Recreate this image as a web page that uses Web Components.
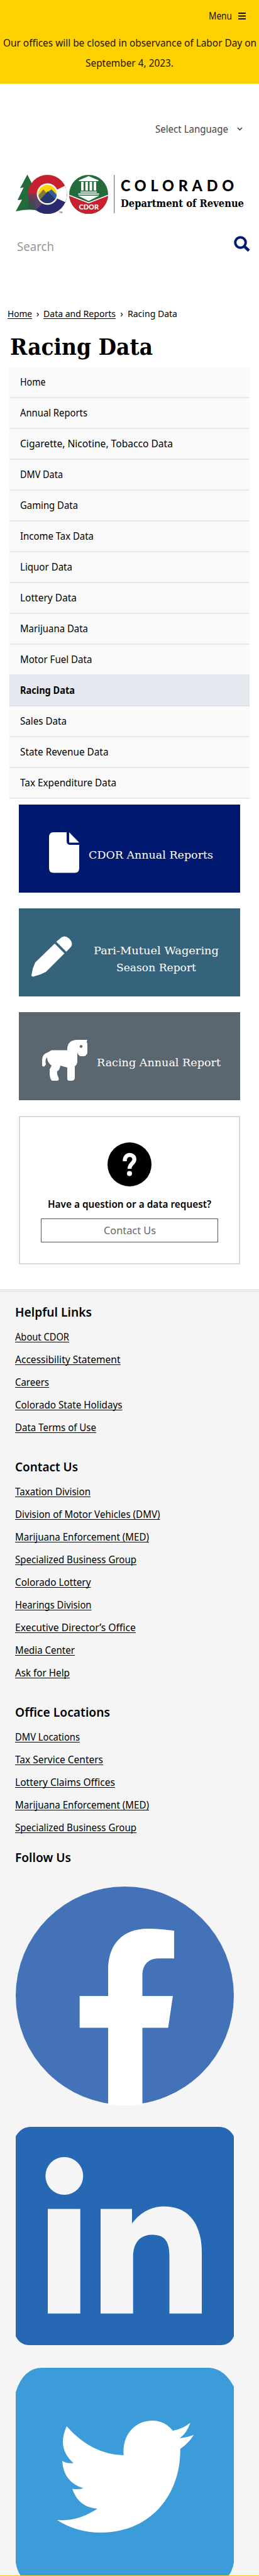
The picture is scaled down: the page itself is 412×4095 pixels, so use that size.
<!DOCTYPE html>
<html lang="en">
<head>
<meta charset="utf-8">
<title>Racing Data | Department of Revenue</title>
<style>
html,body{margin:0;padding:0;background:#fff}
body{width:412px;height:4095px;overflow:hidden;font:16px/1.5 "Noto Sans","Liberation Sans",sans-serif;color:#000}
</style>
</head>
<body>
<revenue-page></revenue-page>
<script>
const define = (name, html, init) => {
  const template = document.createElement('template');
  template.innerHTML = html;
  customElements.define(name, class extends HTMLElement {
    connectedCallback() {
      if (this.shadowRoot) return;
      this.attachShadow({ mode: 'open' }).append(template.content.cloneNode(true));
      if (init) init(this, this.shadowRoot);
    }
  });
};

// Condenses one line of text to the width given by its "w" attribute.
define('fit-text', `<style>
:host{display:block;white-space:nowrap}
span{display:inline-block;transform-origin:0 50%}
:host([u]) span{text-decoration:underline;text-decoration-thickness:1px;text-underline-offset:2px;text-decoration-skip-ink:none}
</style><span><slot></slot></span>`, (host, root) => {
  const w = +host.getAttribute('w'), span = root.querySelector('span');
  host.style.width = w + 'px';
  span.style.transform = `scaleX(${w / span.getBoundingClientRect().width})`;
});

define('site-banner', `<style>
:host{display:block;height:133px;background:#ffd100;color:#201400}
.menu{display:flex;height:50px;align-items:center;justify-content:flex-end;gap:10px;padding-right:21px;margin-bottom:2px}
.note{display:flex;flex-direction:column;align-items:center;line-height:32px}
</style>
<div class="menu"><fit-text w="37">Menu</fit-text><svg width="12" height="11"><path d="M0 1h12M0 5.5h12M0 10h12" stroke="#111" stroke-width="2"/></svg></div>
<div class="note"><fit-text w="403">Our offices will be closed in observance of Labor Day on</fit-text><fit-text w="140">September 4, 2023.</fit-text></div>`);

define('brand-logo', `<style>
:host{display:flex;height:70px;gap:8px}
svg{display:block;flex:none}
.name{font:900 24px/30px Lato,sans-serif;letter-spacing:7px;padding-top:5.7px}
.dept{font:700 16px/24px "DejaVu Serif",serif;margin-top:2.7px}
</style>
<svg width="160" height="70" viewBox="24 274 160 70">
<defs><clipPath id="c"><circle cx="75.5" cy="309" r="31"/></clipPath><clipPath id="m"><circle cx="75.5" cy="308.5" r="14.6"/></clipPath><clipPath id="d"><circle cx="141" cy="309" r="31"/></clipPath></defs>
<path d="M43.5 277.5L54 298 66 335Q44 331 25 336L35 317.500 28 318 37.500 298 32 299Z" fill="#236b3b"/>
<g clip-path="url(#c)"><path d="M40 275h70v70H40z" fill="#c8202f"/><path d="M44 327L62 309 78 309 110 309V345H44z" fill="#2a2a70"/><path d="M44 309L55 307 67 319 51 338H40z" fill="#7e3657"/><path d="M49 323L58 313 68 323 56 335z" fill="#5b4262"/><path d="M75.500 309L112 291V325L92 316z" fill="#fff"/></g>
<path d="M47 307L54 318 60 335 44 332z" fill="#2d4a4f" opacity=".45"/>
<circle cx="75.5" cy="308.500" r="17" fill="#fff"/>
<g clip-path="url(#m)"><path d="M58 290h36v36H58z" fill="#ffd200"/><path d="M58 314L69 301 78 312 84 303 94 313V326H58z" fill="#7b7d3e"/><path d="M75 306L82 301 92 312V318L78 316z" fill="#315d9b"/><path d="M58 324L76 304 94 323V326H58z" fill="#25386f"/></g>
<text x="93.500" y="338.500" font-family="Liberation Sans,sans-serif" font-size="4" fill="#223">TM</text>
<g clip-path="url(#d)"><path d="M109 277h64v64h-64z" fill="#236b3b"/><path d="M109 310L141 322.500 173 310V342H109z" fill="#c8202f"/><path d="M109 310L141 322.500 173 310" fill="none" stroke="#fff" stroke-width="1.6"/></g>
<g fill="#fff"><path d="M141 280L156.500 286.500V288H125.500V286.500zM129 289h4v14h-4zM135.800 289h4v14h-4zM142.500 289h4v14h-4zM149 289h4v14h-4zM128 304.500h26v1.800h-26zM124.500 307.500h33v1.900h-33zM124 311h34L141 319.500z"/></g>
<text x="125.500" y="333" font-family="Lato,sans-serif" font-weight="900" font-size="11" fill="#fff">CDOR</text>
<path d="M181.700 278V339" stroke="#888" stroke-width="1.400"/>
</svg>
<div><fit-text class="name" w="187">COLORADO</fit-text><fit-text class="dept" w="196">Department of Revenue</fit-text></div>`);

define('site-header', `<style>
:host{display:block;height:333px;padding-top:56px;box-sizing:border-box}
.lang{display:flex;justify-content:flex-end;align-items:center;height:32px;color:#444;gap:14px;padding-right:26px}
brand-logo{margin:53px 0 0 24px}
.search{display:flex;justify-content:space-between;margin-top:26px;padding:0 14px 0 27px;color:#999;font-size:20px;line-height:44px}
svg{margin-top:5px}
</style>
<div class="lang"><fit-text w="116">Select Language</fit-text><svg style="margin:0" width="9" height="6"><path d="M1 1L4.500 4.500 8 1" fill="none" stroke="#444" stroke-width="1.600"/></svg></div>
<brand-logo></brand-logo>
<div class="search"><fit-text w="59">Search</fit-text><svg width="26" height="26"><circle cx="10.500" cy="10.500" r="8.300" fill="none" stroke="#001970" stroke-width="4"/><path d="M16.500 16.500L24 23.500" stroke="#001970" stroke-width="4.500"/></svg></div>`);

define('bread-crumbs', `<style>
:host{display:flex;font-size:15px;line-height:30px;padding:17px 0 0 12px;height:49px;box-sizing:border-box}
i{font-style:normal;width:18px;text-align:center}
</style><fit-text u w="39">Home</fit-text><i>›</i><fit-text u w="115">Data and Reports</fit-text><i style="width:19px">›</i><fit-text w="79">Racing Data</fit-text>`);

const menu = [['Home',40.5],['Annual Reports',107],['Cigarette, Nicotine, Tobacco Data',243],['DMV Data',68],['Gaming Data',92],['Income Tax Data',117],['Liquor Data',83],['Lottery Data',90],['Marijuana Data',108],['Motor Fuel Data',114.5],['Racing Data',87],['Sales Data',74],['State Revenue Data',140.5],['Tax Expenditure Data',153]];
define('data-menu', `<style>
:host{display:block;margin:0 15px}
.item{height:49px;box-sizing:border-box;border-bottom:2px solid #e9e9e9;background:#fafafa;padding-left:17px;line-height:46px}
.active{background:#e6e8f0;font-weight:700;margin-top:-2px;padding-top:2px;height:51px;border-color:#e0e1e8}
</style>` + menu.map(([t, w]) => `<div class="item${t === 'Racing Data' ? ' active' : ''}"><fit-text w="${w}">${t}</fit-text></div>`).join(''));

define('report-card', `<style>
:host{display:flex;box-sizing:border-box;height:140px;margin:0 30px 25px;color:#fff;font:17px/27px "DejaVu Serif",serif}
::slotted(svg){display:block;margin-top:44px;flex:none}
.label{display:flex;flex-direction:column;align-items:center}
</style><slot name="icon"></slot><div class="label"><slot></slot></div>`, (host, root) => {
  host.style.background = host.getAttribute('fill');
  host.style.paddingLeft = host.getAttribute('inset') + 'px';
  root.querySelector('.label').style.cssText = `padding:${host.getAttribute('top')}px 0 0 ${host.getAttribute('gap')}px`;
});

define('question-box', `<style>
:host{display:flex;flex-direction:column;align-items:center;box-sizing:border-box;margin:0 30px;height:236px;border:2px solid #d9d9d9;padding-top:40px}
b{display:block;margin:13px 0 8px;line-height:30px;font-weight:600}
.btn{box-sizing:border-box;width:282px;height:38px;border:1px solid #555;display:flex;justify-content:center;color:#666;font-size:17px;line-height:36px}
</style>
<svg width="70" height="70"><circle cx="35" cy="35" r="35"/><path d="M27.500 30C27 16 43.500 18 42.700 27.500C42.200 33.500 35 34 35 42" fill="none" stroke="#fff" stroke-width="6.400"/><circle cx="35" cy="49.500" r="4" fill="#fff"/></svg>
<b><fit-text w="260">Have a question or a data request?</fit-text></b>
<div class="btn"><fit-text w="83">Contact Us</fit-text></div>`);

define('link-group', `<style>
:host{display:block;margin-bottom:30px;line-height:36px}
h2{font-size:20px;font-weight:600;line-height:30px;height:36px;margin:0}
</style><h2><slot name="title"></slot></h2><slot></slot>`);

const group = (title, tw, links, style = '') => `<link-group style="${style}"><fit-text slot="title" w="${tw}">${title}</fit-text>${links.map(([t, w]) => `<fit-text u w="${w}">${t}</fit-text>`).join('')}</link-group>`;

define('site-footer', `<style>
:host{display:block;box-sizing:border-box;height:2045px;overflow:hidden;background:#f5f5f5;border-top:1px solid #ccc;position:relative}
.rule{height:1px;background:#dedede;margin:2px 0 17px}
.in{padding-left:24.300px}
.social{margin-left:25px}
svg{display:block}
.bar{position:absolute;left:0;right:0;bottom:0;height:1px;background:#ffd100}
</style>
<div class="rule"></div><div class="in">
${group('Helpful Links',122,[['About CDOR',86],['Accessibility Statement',167.5],['Careers',54],['Colorado State Holidays',170.5],['Data Terms of Use',129]])}
${group('Contact Us',100,[['Taxation Division',120],['Division of Motor Vehicles (DMV)',230.5],['Marijuana Enforcement (MED)',213],['Specialized Business Group',193],['Colorado Lottery',120.5],['Hearings Division',121.5],['Executive Director’s Office',192],['Media Center',95],['Ask for Help',87]])}
${group('Office Locations',151,[['DMV Locations',103],['Tax Service Centers',140],['Lottery Claims Offices',159],['Marijuana Enforcement (MED)',213],['Specialized Business Group',193]],'margin-bottom:15px')}
${group('Follow Us',89,[],'margin-bottom:25px')}
</div><div class="social">
<svg width="347" height="348"><circle cx="173.500" cy="173.500" r="173.500" fill="#4472b8"/><path d="M147 346.500V224.500H101.700V174H147V132C147 92 170 67 210 67C226 67 240 69 252 70.300V114.300H228C211 114.300 201.500 124 201.500 142V174H250L242.500 224.500H201.500V346.500Q174 350 147 346.500z" fill="#fff"/></svg>
<svg width="347" height="347" style="margin-top:34px"><path d="M0 15Q9 0 24 0H323Q339 0 347 15V333Q341 347 325 347H22Q7 347 0 333z" fill="#2768b4"/><g fill="#f5f5f5"><circle cx="77.300" cy="78" r="30"/><path d="M51 130.500h51.700V296.700H51zM135 130.500H185V153.500Q205 126.500 236 126.500C276 126.500 296 155 296 200V296.700H244.500V207C244.500 184 239 171.500 217 171.500C197 171.500 186.700 185 186.700 207V296.700H135z"/></g></svg>
<svg width="347" height="347" style="margin-top:35.500px"><path d="M0 39Q12 0 42 0H309Q332 2 347 30V310Q340 347 300 347H42Q6 345 0 310z" fill="#3c9bd9"/><path d="M65.700 242Q98 245 130 224Q100 222 90 192.500Q99 194 107.700 191.500Q76 182 74 148Q83 153 92 151.500Q65 128 81 93Q121 138 171.700 139C169 107 189 84 218 84Q236 84 250 100Q266 97 277.700 87.500Q272 104 261 112Q275 110 283.300 106.500Q276 119 261.700 129C263 200 216 262 135 262Q97 262 65.700 242z" fill="#fff"/></svg>
</div><div class="bar"></div>`);

define('revenue-page', `<style>
:host{display:block;width:412px}
h1{font:700 35px/50px "DejaVu Serif",serif;margin:0;padding:12px 0 0 16px;height:57px}
data-menu{margin-bottom:9px}
</style>
<site-banner></site-banner><site-header></site-header><bread-crumbs></bread-crumbs>
<h1><fit-text w="227">Racing Data</fit-text></h1>
<data-menu></data-menu>
<report-card fill="#00186f" inset="48" gap="15" top="66.500"><svg slot="icon" width="48" height="65" viewBox="0 0 48 65"><path d="M7 0H28V14Q28 20 34 20H48V57Q48 64.500 41 64.500H7Q0 64.500 0 57V8Q0 0 7 0zM32 0L48 16.500H32z" fill="#fff"/></svg><fit-text w="198">CDOR Annual Reports</fit-text></report-card>
<report-card fill="#36637c" inset="20" gap="34" top="53.500"><svg slot="icon" width="65" height="65" viewBox="0 0 65 65"><path d="M37 12L52.500 27.500 23 57Q14 62 3 64.500Q-1 65 .5 60Q2 50 6 42zM39.500 9L48 2Q54-2 60 4Q67 11 63 17L55.500 25z" fill="#fff"/></svg><fit-text w="199">Pari-Mutuel Wagering</fit-text><fit-text w="127">Season Report</fit-text></report-card>
<report-card fill="#5b6770" inset="37" gap="10" top="66.500"><svg slot="icon" width="77" height="65" viewBox="0 0 77 65"><path d="M15 16.500H40V14Q41 0 56 0H72Q70 3 72 6V21Q70 26 66 26H62Q58 26 56 20V36Q55 40 52 42V61Q51 65 47 65H43Q40 65 40 61V44L29 41Q28 48 24 50Q23 54 26 60Q28 65 23 65H16Q13 64 12 55V47L15 41Q8 36 8 28Q4 31 6 39Q3 45 0 41V31Q1 22 9 20z" fill="#fff"/><circle cx="62" cy="10.500" r="2.200" fill="#5b6770"/></svg><fit-text w="197">Racing Annual Report</fit-text></report-card>
<question-box></question-box>
<site-footer style="margin-top:40px"></site-footer>`);
</script>
</body>
</html>
